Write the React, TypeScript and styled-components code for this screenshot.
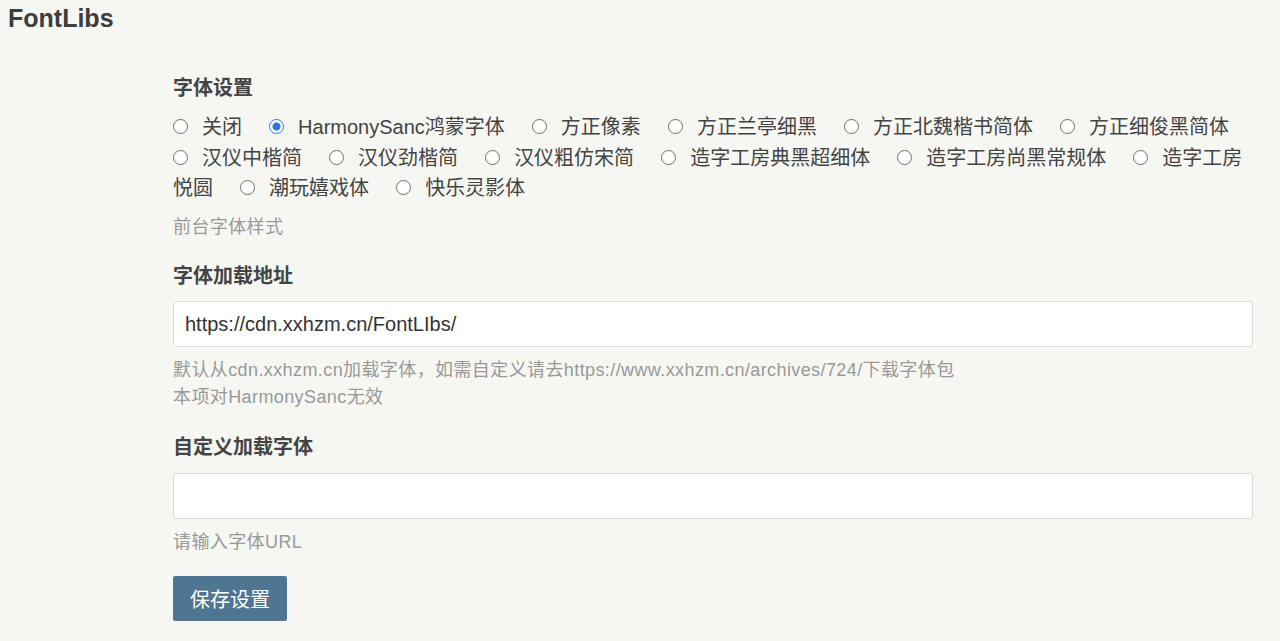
import React from 'react';
import styled, { createGlobalStyle } from 'styled-components';

const GlobalStyle = createGlobalStyle`
  html, body {
    margin: 0;
    padding: 0;
    background-color: #f6f6f3;
  }
  body {
    font-family: 'Liberation Sans', 'Noto Sans CJK SC', sans-serif;
    color: #444;
  }
`;

// Page layout
const Page = styled.div`
  min-height: 641px;
`;

const Title = styled.h1`
  margin: 0;
  padding: 0 8px;
  font-size: 25px;
  line-height: 36px;
  font-weight: bold;
  color: #3d3d3d;
`;

const Form = styled.form`
  padding: 37px 27px 0 173px;
`;

const Field = styled.div`
  margin-bottom: 20.5px;
`;

const Label = styled.div<{ $gap?: number }>`
  font-size: 20px;
  line-height: 30px;
  font-weight: bold;
  color: #444;
  margin-bottom: ${(p) => p.$gap ?? 10}px;
`;

const Desc = styled.div`
  margin-top: 10px;
  font-size: 18px;
  line-height: 27px;
  color: #999;
  letter-spacing: 0.4px;
`;

// Radio group: options are separated by a widened space so that the gap
// hangs at the end of a line, like the original inline markup
const RadioGroup = styled.div`
  font-size: 20px;
  line-height: 30.5px;
  color: #444;
  word-spacing: 21.5px;
`;

const Option = styled.label`
  cursor: pointer;
  word-spacing: normal;
`;

const Radio = styled.input.attrs({ type: 'radio' })`
  appearance: none;
  display: inline-block;
  width: 15px;
  height: 15px;
  margin: 0 14px 0 0;
  vertical-align: 0px;
  border: 1.5px solid #6e6e6e;
  border-radius: 50%;
  background: #fff;
  box-sizing: border-box;

  &:checked {
    border-color: #2f76e0;
    background: radial-gradient(circle, #2f76e0 0 3.8px, #fff 4.3px);
  }
`;

const TextInput = styled.input`
  display: block;
  width: 100%;
  height: 46px;
  box-sizing: border-box;
  padding: 0 11px;
  border: 1px solid #dcdcdc;
  border-radius: 3px;
  background: #fff;
  font-family: 'Liberation Sans', 'Noto Sans CJK SC', sans-serif;
  font-size: 20px;
  color: #333;
  outline: none;
`;

const SaveButton = styled.button`
  height: 45px;
  padding: 0 17px;
  border: none;
  border-radius: 2px;
  background-color: #4e7591;
  color: #fff;
  font-family: 'Liberation Sans', 'Noto Sans CJK SC', sans-serif;
  font-size: 20px;
  cursor: pointer;
`;

const fonts = [
  '关闭',
  'HarmonySanc鸿蒙字体',
  '方正像素',
  '方正兰亭细黑',
  '方正北魏楷书简体',
  '方正细俊黑简体',
  '汉仪中楷简',
  '汉仪劲楷简',
  '汉仪粗仿宋简',
  '造字工房典黑超细体',
  '造字工房尚黑常规体',
  '造字工房悦圆',
  '潮玩嬉戏体',
  '快乐灵影体',
];

export default function App() {
  return (
    <Page>
      <GlobalStyle />
      <Title>FontLibs</Title>
      <Form onSubmit={(e) => e.preventDefault()}>
        <Field>
          <Label $gap={9}>字体设置</Label>
          <RadioGroup>
            {fonts.map((name, i) => (
              <React.Fragment key={name}>
                {i > 0 && ' '}
                <Option>
                  <Radio name='font' defaultChecked={i === 1} />
                  {name}
                </Option>
              </React.Fragment>
            ))}
          </RadioGroup>
          <Desc>前台字体样式</Desc>
        </Field>

        <Field>
          <Label>字体加载地址</Label>
          <TextInput defaultValue='https://cdn.xxhzm.cn/FontLIbs/' />
          <Desc>
            默认从cdn.xxhzm.cn加载字体，如需自定义请去https://www.xxhzm.cn/archives/724/下载字体包
            <br />
            本项对HarmonySanc无效
          </Desc>
        </Field>

        <Field>
          <Label $gap={11}>自定义加载字体</Label>
          <TextInput />
          <Desc>请输入字体URL</Desc>
        </Field>

        <SaveButton type='submit'>保存设置</SaveButton>
      </Form>
    </Page>
  );
}
